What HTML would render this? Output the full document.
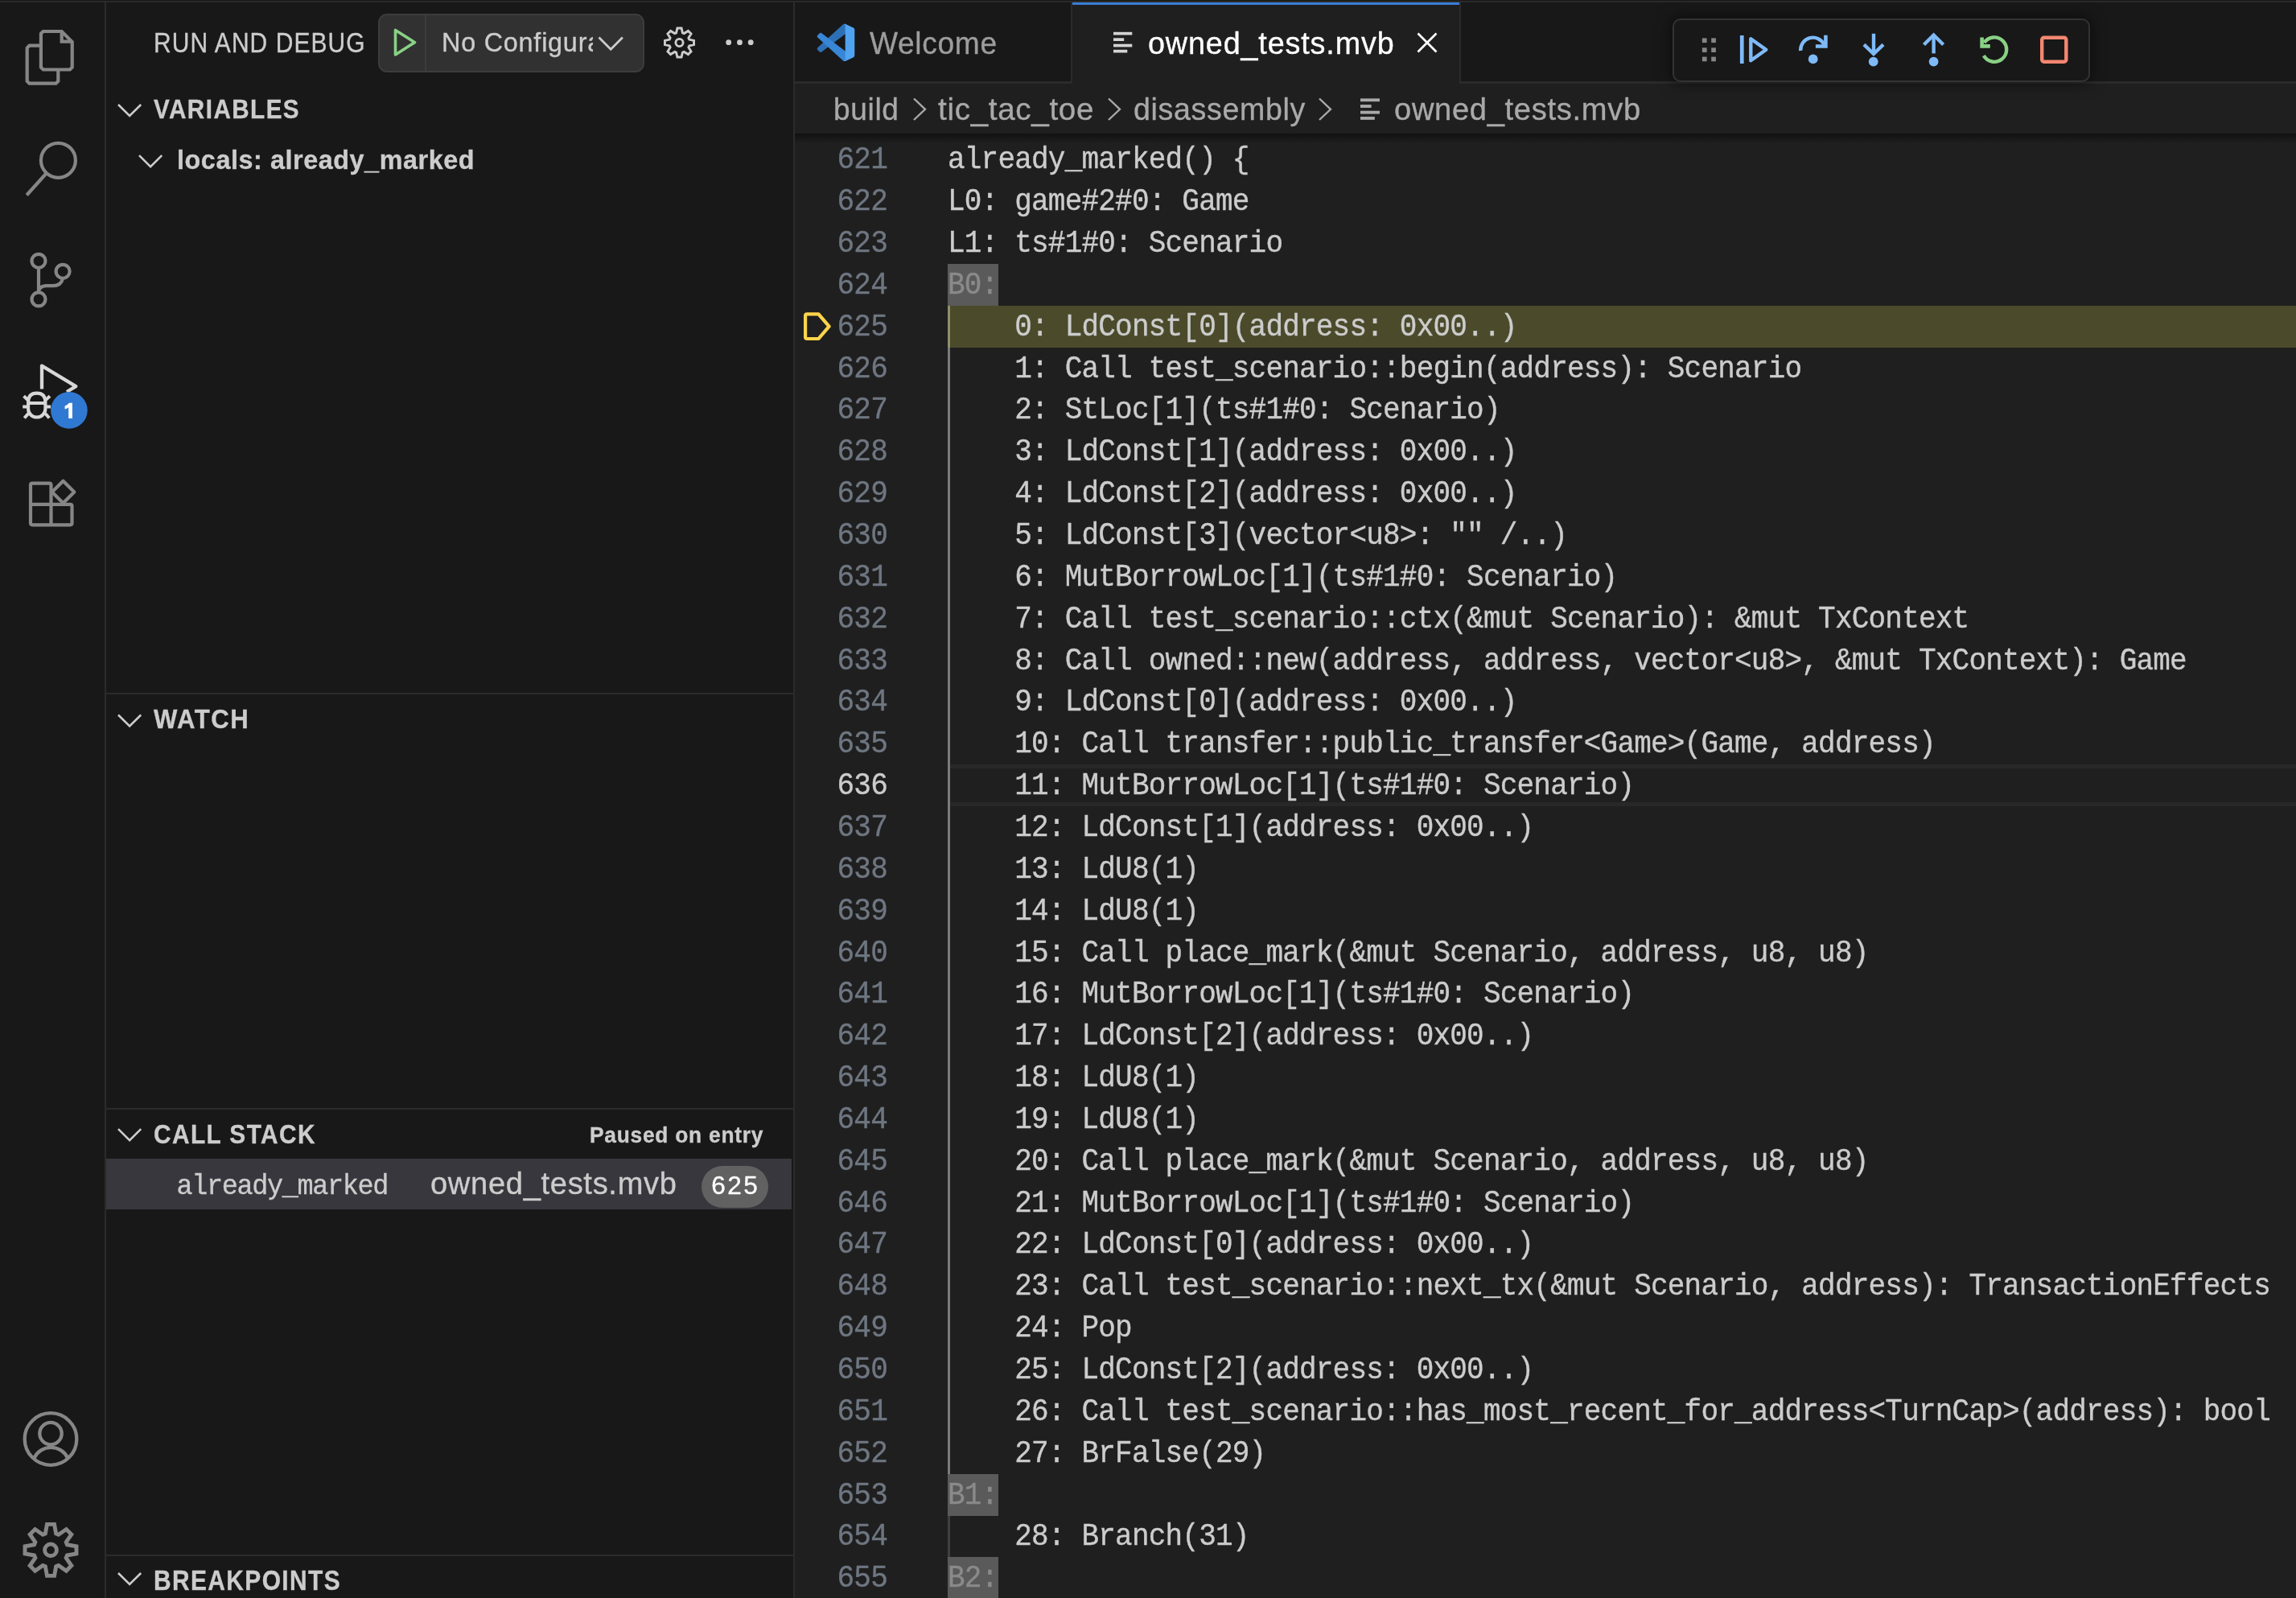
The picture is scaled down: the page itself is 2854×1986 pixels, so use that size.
<!DOCTYPE html>
<html><head><meta charset="utf-8"><style>
html,body{margin:0;padding:0;background:#181818;}
body{width:2854px;height:1986px;position:relative;overflow:hidden;}
.r{position:absolute;}
.t{position:absolute;white-space:pre;}
.ov{position:absolute;left:0;top:0;}
#root{position:absolute;left:0;top:0;width:2854px;height:1986px;will-change:transform;}
.t{-webkit-text-stroke:0.35px currentColor;}
</style></head><body><div id="root">
<div class="r" style="left:0px;top:0px;width:2854px;height:1986px;background:#181818;"></div><div class="r" style="left:0px;top:1px;width:2854px;height:2px;background:#2a2a2a;"></div><div class="r" style="left:130px;top:3px;width:2px;height:1983px;background:#2b2b2b;"></div><div class="r" style="left:986px;top:3px;width:2px;height:1983px;background:#2b2b2b;"></div><div class="r" style="left:988px;top:104px;width:1866px;height:1882px;background:#1f1f1f;"></div><div class="r" style="left:988px;top:101px;width:1866px;height:3px;background:#2b2b2b;"></div><div class="r" style="left:1331px;top:3px;width:2px;height:98px;background:#2b2b2b;"></div><div class="r" style="left:1333px;top:3px;width:481px;height:101px;background:#1f1f1f;"></div><div class="r" style="left:1333px;top:3px;width:481px;height:3px;background:#3a7dd6;"></div><div class="r" style="left:1814px;top:3px;width:2px;height:101px;background:#2b2b2b;"></div><div class="r" style="left:988px;top:166px;width:1866px;height:12px;background:linear-gradient(to bottom, rgba(0,0,0,0.45), rgba(0,0,0,0));"></div><div class="t" style="left:1081.00px;top:32.00px;font-family:'Liberation Sans', sans-serif;font-size:39.20px;line-height:43px;font-weight:normal;font-style:normal;color:#9d9d9d;letter-spacing:0.700px;transform:scaleX(0.9477);transform-origin:0 0;">Welcome</div><div class="t" style="left:1427.00px;top:31.20px;font-family:'Liberation Sans', sans-serif;font-size:39.50px;line-height:44px;font-weight:normal;font-style:normal;color:#ffffff;letter-spacing:0.900px;transform:scaleX(0.9554);transform-origin:0 0;">owned_tests.mvb</div><div class="t" style="left:1035.70px;top:114.10px;font-family:'Liberation Sans', sans-serif;font-size:38.80px;line-height:43px;font-weight:normal;font-style:normal;color:#a9a9a9;letter-spacing:0.700px;transform:scaleX(0.9552);transform-origin:0 0;">build</div><div class="t" style="left:1166.30px;top:114.10px;font-family:'Liberation Sans', sans-serif;font-size:38.80px;line-height:43px;font-weight:normal;font-style:normal;color:#a9a9a9;letter-spacing:0.700px;transform:scaleX(0.9937);transform-origin:0 0;">tic_tac_toe</div><div class="t" style="left:1408.60px;top:114.10px;font-family:'Liberation Sans', sans-serif;font-size:38.80px;line-height:43px;font-weight:normal;font-style:normal;color:#a9a9a9;letter-spacing:0.700px;transform:scaleX(0.9673);transform-origin:0 0;">disassembly</div><div class="t" style="left:1733.40px;top:114.10px;font-family:'Liberation Sans', sans-serif;font-size:38.80px;line-height:43px;font-weight:normal;font-style:normal;color:#a9a9a9;letter-spacing:0.700px;transform:scaleX(0.9821);transform-origin:0 0;">owned_tests.mvb</div><div class="r" style="left:2079px;top:23px;width:519px;height:79px;background:#181818;border:2px solid #333333;box-sizing:border-box;border-radius:10px;box-shadow:0 0 18px 2px rgba(0,0,0,0.5);"></div><div class="r" style="left:1178px;top:379.95px;width:1676px;height:51.85px;background:#4b4b2c;"></div><div class="r" style="left:1181px;top:950.30px;width:1673px;height:51.85px;border-top:5px solid #282828;border-bottom:5px solid #282828;box-sizing:border-box;"></div><div class="r" style="left:1178px;top:328.10px;width:63px;height:51.85px;background:#5a5a5a;"></div><div class="r" style="left:1178px;top:1831.75px;width:63px;height:51.85px;background:#5a5a5a;"></div><div class="r" style="left:1178px;top:1935.45px;width:63px;height:51.85px;background:#5a5a5a;"></div><div class="r" style="left:1178px;top:379.95px;width:3px;height:1451.80px;background:#7a7a7a;"></div><div class="r" style="left:1178px;top:1883.60px;width:3px;height:51.85px;background:#404040;"></div><div class="r" style="left:1178px;top:379.95px;width:3px;height:51.85px;background:#8f8f6a;"></div><div class="t" style="left:1040.57px;top:179.35px;font-family:'Liberation Mono', monospace;font-size:36.0px;line-height:41px;color:#6e7681;letter-spacing:-0.794px;transform:scaleY(1.07);transform-origin:0 30px;">621</div><div class="t" style="left:1178.00px;top:179.35px;font-family:'Liberation Mono', monospace;font-size:36.0px;line-height:41px;color:#cccccc;letter-spacing:-0.794px;transform:scaleY(1.07);transform-origin:0 30px;">already_marked() {</div><div class="t" style="left:1040.57px;top:231.20px;font-family:'Liberation Mono', monospace;font-size:36.0px;line-height:41px;color:#6e7681;letter-spacing:-0.794px;transform:scaleY(1.07);transform-origin:0 30px;">622</div><div class="t" style="left:1178.00px;top:231.20px;font-family:'Liberation Mono', monospace;font-size:36.0px;line-height:41px;color:#cccccc;letter-spacing:-0.794px;transform:scaleY(1.07);transform-origin:0 30px;">L0: game#2#0: Game</div><div class="t" style="left:1040.57px;top:283.05px;font-family:'Liberation Mono', monospace;font-size:36.0px;line-height:41px;color:#6e7681;letter-spacing:-0.794px;transform:scaleY(1.07);transform-origin:0 30px;">623</div><div class="t" style="left:1178.00px;top:283.05px;font-family:'Liberation Mono', monospace;font-size:36.0px;line-height:41px;color:#cccccc;letter-spacing:-0.794px;transform:scaleY(1.07);transform-origin:0 30px;">L1: ts#1#0: Scenario</div><div class="t" style="left:1040.57px;top:334.90px;font-family:'Liberation Mono', monospace;font-size:36.0px;line-height:41px;color:#6e7681;letter-spacing:-0.794px;transform:scaleY(1.07);transform-origin:0 30px;">624</div><div class="t" style="left:1178.00px;top:334.90px;font-family:'Liberation Mono', monospace;font-size:36.0px;line-height:41px;color:#8a8a8a;letter-spacing:-0.794px;transform:scaleY(1.07);transform-origin:0 30px;">B0:</div><div class="t" style="left:1040.57px;top:386.75px;font-family:'Liberation Mono', monospace;font-size:36.0px;line-height:41px;color:#6e7681;letter-spacing:-0.794px;transform:scaleY(1.07);transform-origin:0 30px;">625</div><div class="t" style="left:1178.00px;top:386.75px;font-family:'Liberation Mono', monospace;font-size:36.0px;line-height:41px;color:#cccccc;letter-spacing:-0.794px;transform:scaleY(1.07);transform-origin:0 30px;">    0: LdConst[0](address: 0x00..)</div><div class="t" style="left:1040.57px;top:438.60px;font-family:'Liberation Mono', monospace;font-size:36.0px;line-height:41px;color:#6e7681;letter-spacing:-0.794px;transform:scaleY(1.07);transform-origin:0 30px;">626</div><div class="t" style="left:1178.00px;top:438.60px;font-family:'Liberation Mono', monospace;font-size:36.0px;line-height:41px;color:#cccccc;letter-spacing:-0.794px;transform:scaleY(1.07);transform-origin:0 30px;">    1: Call test_scenario::begin(address): Scenario</div><div class="t" style="left:1040.57px;top:490.45px;font-family:'Liberation Mono', monospace;font-size:36.0px;line-height:41px;color:#6e7681;letter-spacing:-0.794px;transform:scaleY(1.07);transform-origin:0 30px;">627</div><div class="t" style="left:1178.00px;top:490.45px;font-family:'Liberation Mono', monospace;font-size:36.0px;line-height:41px;color:#cccccc;letter-spacing:-0.794px;transform:scaleY(1.07);transform-origin:0 30px;">    2: StLoc[1](ts#1#0: Scenario)</div><div class="t" style="left:1040.57px;top:542.30px;font-family:'Liberation Mono', monospace;font-size:36.0px;line-height:41px;color:#6e7681;letter-spacing:-0.794px;transform:scaleY(1.07);transform-origin:0 30px;">628</div><div class="t" style="left:1178.00px;top:542.30px;font-family:'Liberation Mono', monospace;font-size:36.0px;line-height:41px;color:#cccccc;letter-spacing:-0.794px;transform:scaleY(1.07);transform-origin:0 30px;">    3: LdConst[1](address: 0x00..)</div><div class="t" style="left:1040.57px;top:594.15px;font-family:'Liberation Mono', monospace;font-size:36.0px;line-height:41px;color:#6e7681;letter-spacing:-0.794px;transform:scaleY(1.07);transform-origin:0 30px;">629</div><div class="t" style="left:1178.00px;top:594.15px;font-family:'Liberation Mono', monospace;font-size:36.0px;line-height:41px;color:#cccccc;letter-spacing:-0.794px;transform:scaleY(1.07);transform-origin:0 30px;">    4: LdConst[2](address: 0x00..)</div><div class="t" style="left:1040.57px;top:646.00px;font-family:'Liberation Mono', monospace;font-size:36.0px;line-height:41px;color:#6e7681;letter-spacing:-0.794px;transform:scaleY(1.07);transform-origin:0 30px;">630</div><div class="t" style="left:1178.00px;top:646.00px;font-family:'Liberation Mono', monospace;font-size:36.0px;line-height:41px;color:#cccccc;letter-spacing:-0.794px;transform:scaleY(1.07);transform-origin:0 30px;">    5: LdConst[3](vector&lt;u8&gt;: &quot;&quot; /..)</div><div class="t" style="left:1040.57px;top:697.85px;font-family:'Liberation Mono', monospace;font-size:36.0px;line-height:41px;color:#6e7681;letter-spacing:-0.794px;transform:scaleY(1.07);transform-origin:0 30px;">631</div><div class="t" style="left:1178.00px;top:697.85px;font-family:'Liberation Mono', monospace;font-size:36.0px;line-height:41px;color:#cccccc;letter-spacing:-0.794px;transform:scaleY(1.07);transform-origin:0 30px;">    6: MutBorrowLoc[1](ts#1#0: Scenario)</div><div class="t" style="left:1040.57px;top:749.70px;font-family:'Liberation Mono', monospace;font-size:36.0px;line-height:41px;color:#6e7681;letter-spacing:-0.794px;transform:scaleY(1.07);transform-origin:0 30px;">632</div><div class="t" style="left:1178.00px;top:749.70px;font-family:'Liberation Mono', monospace;font-size:36.0px;line-height:41px;color:#cccccc;letter-spacing:-0.794px;transform:scaleY(1.07);transform-origin:0 30px;">    7: Call test_scenario::ctx(&amp;mut Scenario): &amp;mut TxContext</div><div class="t" style="left:1040.57px;top:801.55px;font-family:'Liberation Mono', monospace;font-size:36.0px;line-height:41px;color:#6e7681;letter-spacing:-0.794px;transform:scaleY(1.07);transform-origin:0 30px;">633</div><div class="t" style="left:1178.00px;top:801.55px;font-family:'Liberation Mono', monospace;font-size:36.0px;line-height:41px;color:#cccccc;letter-spacing:-0.794px;transform:scaleY(1.07);transform-origin:0 30px;">    8: Call owned::new(address, address, vector&lt;u8&gt;, &amp;mut TxContext): Game</div><div class="t" style="left:1040.57px;top:853.40px;font-family:'Liberation Mono', monospace;font-size:36.0px;line-height:41px;color:#6e7681;letter-spacing:-0.794px;transform:scaleY(1.07);transform-origin:0 30px;">634</div><div class="t" style="left:1178.00px;top:853.40px;font-family:'Liberation Mono', monospace;font-size:36.0px;line-height:41px;color:#cccccc;letter-spacing:-0.794px;transform:scaleY(1.07);transform-origin:0 30px;">    9: LdConst[0](address: 0x00..)</div><div class="t" style="left:1040.57px;top:905.25px;font-family:'Liberation Mono', monospace;font-size:36.0px;line-height:41px;color:#6e7681;letter-spacing:-0.794px;transform:scaleY(1.07);transform-origin:0 30px;">635</div><div class="t" style="left:1178.00px;top:905.25px;font-family:'Liberation Mono', monospace;font-size:36.0px;line-height:41px;color:#cccccc;letter-spacing:-0.794px;transform:scaleY(1.07);transform-origin:0 30px;">    10: Call transfer::public_transfer&lt;Game&gt;(Game, address)</div><div class="t" style="left:1040.57px;top:957.10px;font-family:'Liberation Mono', monospace;font-size:36.0px;line-height:41px;color:#cccccc;letter-spacing:-0.794px;transform:scaleY(1.07);transform-origin:0 30px;">636</div><div class="t" style="left:1178.00px;top:957.10px;font-family:'Liberation Mono', monospace;font-size:36.0px;line-height:41px;color:#cccccc;letter-spacing:-0.794px;transform:scaleY(1.07);transform-origin:0 30px;">    11: MutBorrowLoc[1](ts#1#0: Scenario)</div><div class="t" style="left:1040.57px;top:1008.95px;font-family:'Liberation Mono', monospace;font-size:36.0px;line-height:41px;color:#6e7681;letter-spacing:-0.794px;transform:scaleY(1.07);transform-origin:0 30px;">637</div><div class="t" style="left:1178.00px;top:1008.95px;font-family:'Liberation Mono', monospace;font-size:36.0px;line-height:41px;color:#cccccc;letter-spacing:-0.794px;transform:scaleY(1.07);transform-origin:0 30px;">    12: LdConst[1](address: 0x00..)</div><div class="t" style="left:1040.57px;top:1060.80px;font-family:'Liberation Mono', monospace;font-size:36.0px;line-height:41px;color:#6e7681;letter-spacing:-0.794px;transform:scaleY(1.07);transform-origin:0 30px;">638</div><div class="t" style="left:1178.00px;top:1060.80px;font-family:'Liberation Mono', monospace;font-size:36.0px;line-height:41px;color:#cccccc;letter-spacing:-0.794px;transform:scaleY(1.07);transform-origin:0 30px;">    13: LdU8(1)</div><div class="t" style="left:1040.57px;top:1112.65px;font-family:'Liberation Mono', monospace;font-size:36.0px;line-height:41px;color:#6e7681;letter-spacing:-0.794px;transform:scaleY(1.07);transform-origin:0 30px;">639</div><div class="t" style="left:1178.00px;top:1112.65px;font-family:'Liberation Mono', monospace;font-size:36.0px;line-height:41px;color:#cccccc;letter-spacing:-0.794px;transform:scaleY(1.07);transform-origin:0 30px;">    14: LdU8(1)</div><div class="t" style="left:1040.57px;top:1164.50px;font-family:'Liberation Mono', monospace;font-size:36.0px;line-height:41px;color:#6e7681;letter-spacing:-0.794px;transform:scaleY(1.07);transform-origin:0 30px;">640</div><div class="t" style="left:1178.00px;top:1164.50px;font-family:'Liberation Mono', monospace;font-size:36.0px;line-height:41px;color:#cccccc;letter-spacing:-0.794px;transform:scaleY(1.07);transform-origin:0 30px;">    15: Call place_mark(&amp;mut Scenario, address, u8, u8)</div><div class="t" style="left:1040.57px;top:1216.35px;font-family:'Liberation Mono', monospace;font-size:36.0px;line-height:41px;color:#6e7681;letter-spacing:-0.794px;transform:scaleY(1.07);transform-origin:0 30px;">641</div><div class="t" style="left:1178.00px;top:1216.35px;font-family:'Liberation Mono', monospace;font-size:36.0px;line-height:41px;color:#cccccc;letter-spacing:-0.794px;transform:scaleY(1.07);transform-origin:0 30px;">    16: MutBorrowLoc[1](ts#1#0: Scenario)</div><div class="t" style="left:1040.57px;top:1268.20px;font-family:'Liberation Mono', monospace;font-size:36.0px;line-height:41px;color:#6e7681;letter-spacing:-0.794px;transform:scaleY(1.07);transform-origin:0 30px;">642</div><div class="t" style="left:1178.00px;top:1268.20px;font-family:'Liberation Mono', monospace;font-size:36.0px;line-height:41px;color:#cccccc;letter-spacing:-0.794px;transform:scaleY(1.07);transform-origin:0 30px;">    17: LdConst[2](address: 0x00..)</div><div class="t" style="left:1040.57px;top:1320.05px;font-family:'Liberation Mono', monospace;font-size:36.0px;line-height:41px;color:#6e7681;letter-spacing:-0.794px;transform:scaleY(1.07);transform-origin:0 30px;">643</div><div class="t" style="left:1178.00px;top:1320.05px;font-family:'Liberation Mono', monospace;font-size:36.0px;line-height:41px;color:#cccccc;letter-spacing:-0.794px;transform:scaleY(1.07);transform-origin:0 30px;">    18: LdU8(1)</div><div class="t" style="left:1040.57px;top:1371.90px;font-family:'Liberation Mono', monospace;font-size:36.0px;line-height:41px;color:#6e7681;letter-spacing:-0.794px;transform:scaleY(1.07);transform-origin:0 30px;">644</div><div class="t" style="left:1178.00px;top:1371.90px;font-family:'Liberation Mono', monospace;font-size:36.0px;line-height:41px;color:#cccccc;letter-spacing:-0.794px;transform:scaleY(1.07);transform-origin:0 30px;">    19: LdU8(1)</div><div class="t" style="left:1040.57px;top:1423.75px;font-family:'Liberation Mono', monospace;font-size:36.0px;line-height:41px;color:#6e7681;letter-spacing:-0.794px;transform:scaleY(1.07);transform-origin:0 30px;">645</div><div class="t" style="left:1178.00px;top:1423.75px;font-family:'Liberation Mono', monospace;font-size:36.0px;line-height:41px;color:#cccccc;letter-spacing:-0.794px;transform:scaleY(1.07);transform-origin:0 30px;">    20: Call place_mark(&amp;mut Scenario, address, u8, u8)</div><div class="t" style="left:1040.57px;top:1475.60px;font-family:'Liberation Mono', monospace;font-size:36.0px;line-height:41px;color:#6e7681;letter-spacing:-0.794px;transform:scaleY(1.07);transform-origin:0 30px;">646</div><div class="t" style="left:1178.00px;top:1475.60px;font-family:'Liberation Mono', monospace;font-size:36.0px;line-height:41px;color:#cccccc;letter-spacing:-0.794px;transform:scaleY(1.07);transform-origin:0 30px;">    21: MutBorrowLoc[1](ts#1#0: Scenario)</div><div class="t" style="left:1040.57px;top:1527.45px;font-family:'Liberation Mono', monospace;font-size:36.0px;line-height:41px;color:#6e7681;letter-spacing:-0.794px;transform:scaleY(1.07);transform-origin:0 30px;">647</div><div class="t" style="left:1178.00px;top:1527.45px;font-family:'Liberation Mono', monospace;font-size:36.0px;line-height:41px;color:#cccccc;letter-spacing:-0.794px;transform:scaleY(1.07);transform-origin:0 30px;">    22: LdConst[0](address: 0x00..)</div><div class="t" style="left:1040.57px;top:1579.30px;font-family:'Liberation Mono', monospace;font-size:36.0px;line-height:41px;color:#6e7681;letter-spacing:-0.794px;transform:scaleY(1.07);transform-origin:0 30px;">648</div><div class="t" style="left:1178.00px;top:1579.30px;font-family:'Liberation Mono', monospace;font-size:36.0px;line-height:41px;color:#cccccc;letter-spacing:-0.794px;transform:scaleY(1.07);transform-origin:0 30px;">    23: Call test_scenario::next_tx(&amp;mut Scenario, address): TransactionEffects</div><div class="t" style="left:1040.57px;top:1631.15px;font-family:'Liberation Mono', monospace;font-size:36.0px;line-height:41px;color:#6e7681;letter-spacing:-0.794px;transform:scaleY(1.07);transform-origin:0 30px;">649</div><div class="t" style="left:1178.00px;top:1631.15px;font-family:'Liberation Mono', monospace;font-size:36.0px;line-height:41px;color:#cccccc;letter-spacing:-0.794px;transform:scaleY(1.07);transform-origin:0 30px;">    24: Pop</div><div class="t" style="left:1040.57px;top:1683.00px;font-family:'Liberation Mono', monospace;font-size:36.0px;line-height:41px;color:#6e7681;letter-spacing:-0.794px;transform:scaleY(1.07);transform-origin:0 30px;">650</div><div class="t" style="left:1178.00px;top:1683.00px;font-family:'Liberation Mono', monospace;font-size:36.0px;line-height:41px;color:#cccccc;letter-spacing:-0.794px;transform:scaleY(1.07);transform-origin:0 30px;">    25: LdConst[2](address: 0x00..)</div><div class="t" style="left:1040.57px;top:1734.85px;font-family:'Liberation Mono', monospace;font-size:36.0px;line-height:41px;color:#6e7681;letter-spacing:-0.794px;transform:scaleY(1.07);transform-origin:0 30px;">651</div><div class="t" style="left:1178.00px;top:1734.85px;font-family:'Liberation Mono', monospace;font-size:36.0px;line-height:41px;color:#cccccc;letter-spacing:-0.794px;transform:scaleY(1.07);transform-origin:0 30px;">    26: Call test_scenario::has_most_recent_for_address&lt;TurnCap&gt;(address): bool</div><div class="t" style="left:1040.57px;top:1786.70px;font-family:'Liberation Mono', monospace;font-size:36.0px;line-height:41px;color:#6e7681;letter-spacing:-0.794px;transform:scaleY(1.07);transform-origin:0 30px;">652</div><div class="t" style="left:1178.00px;top:1786.70px;font-family:'Liberation Mono', monospace;font-size:36.0px;line-height:41px;color:#cccccc;letter-spacing:-0.794px;transform:scaleY(1.07);transform-origin:0 30px;">    27: BrFalse(29)</div><div class="t" style="left:1040.57px;top:1838.55px;font-family:'Liberation Mono', monospace;font-size:36.0px;line-height:41px;color:#6e7681;letter-spacing:-0.794px;transform:scaleY(1.07);transform-origin:0 30px;">653</div><div class="t" style="left:1178.00px;top:1838.55px;font-family:'Liberation Mono', monospace;font-size:36.0px;line-height:41px;color:#8a8a8a;letter-spacing:-0.794px;transform:scaleY(1.07);transform-origin:0 30px;">B1:</div><div class="t" style="left:1040.57px;top:1890.40px;font-family:'Liberation Mono', monospace;font-size:36.0px;line-height:41px;color:#6e7681;letter-spacing:-0.794px;transform:scaleY(1.07);transform-origin:0 30px;">654</div><div class="t" style="left:1178.00px;top:1890.40px;font-family:'Liberation Mono', monospace;font-size:36.0px;line-height:41px;color:#cccccc;letter-spacing:-0.794px;transform:scaleY(1.07);transform-origin:0 30px;">    28: Branch(31)</div><div class="t" style="left:1040.57px;top:1942.25px;font-family:'Liberation Mono', monospace;font-size:36.0px;line-height:41px;color:#6e7681;letter-spacing:-0.794px;transform:scaleY(1.07);transform-origin:0 30px;">655</div><div class="t" style="left:1178.00px;top:1942.25px;font-family:'Liberation Mono', monospace;font-size:36.0px;line-height:41px;color:#8a8a8a;letter-spacing:-0.794px;transform:scaleY(1.07);transform-origin:0 30px;">B2:</div><div class="t" style="left:191.30px;top:34.30px;font-family:'Liberation Sans', sans-serif;font-size:34.20px;line-height:38px;font-weight:normal;font-style:normal;color:#cccccc;letter-spacing:1.200px;transform:scaleX(0.8771);transform-origin:0 0;">RUN AND DEBUG</div><div class="r" style="left:470px;top:17px;width:331px;height:73px;background:#313131;border:2px solid #3c3c3c;box-sizing:border-box;border-radius:11px;"></div><div class="r" style="left:528px;top:19px;width:2px;height:69px;background:#3c3c3c;"></div><div class="r" style="left:540px;top:20px;width:197px;height:66px;overflow:hidden;"><div class="t" style="left:8.50px;top:14.20px;font-family:'Liberation Sans', sans-serif;font-size:33.40px;line-height:37px;font-weight:normal;font-style:normal;color:#cccccc;letter-spacing:0.800px;transform:scaleX(0.9691);transform-origin:0 0;">No Configuration</div></div><div class="t" style="left:190.80px;top:116.80px;font-family:'Liberation Sans', sans-serif;font-size:33.40px;line-height:37px;font-weight:bold;font-style:normal;color:#cccccc;letter-spacing:1.600px;transform:scaleX(0.8888);transform-origin:0 0;">VARIABLES</div><div class="t" style="left:219.80px;top:179.00px;font-family:'Liberation Sans', sans-serif;font-size:34.00px;line-height:38px;font-weight:bold;font-style:normal;color:#cccccc;letter-spacing:0.600px;transform:scaleX(0.9505);transform-origin:0 0;">locals: already_marked</div><div class="r" style="left:132px;top:861px;width:854px;height:2px;background:#2b2b2b;"></div><div class="t" style="left:190.60px;top:874.10px;font-family:'Liberation Sans', sans-serif;font-size:33.80px;line-height:38px;font-weight:bold;font-style:normal;color:#cccccc;letter-spacing:1.600px;transform:scaleX(0.9204);transform-origin:0 0;">WATCH</div><div class="r" style="left:132px;top:1377px;width:854px;height:2px;background:#2b2b2b;"></div><div class="t" style="left:190.60px;top:1390.20px;font-family:'Liberation Sans', sans-serif;font-size:33.80px;line-height:38px;font-weight:bold;font-style:normal;color:#cccccc;letter-spacing:1.600px;transform:scaleX(0.8827);transform-origin:0 0;">CALL STACK</div><div class="t" style="left:733.20px;top:1395.00px;font-family:'Liberation Sans', sans-serif;font-size:27.60px;line-height:31px;font-weight:bold;font-style:normal;color:#cccccc;letter-spacing:0.800px;transform:scaleX(0.9538);transform-origin:0 0;">Paused on entry</div><div class="r" style="left:132px;top:1440px;width:852px;height:63px;background:#37373d;"></div><div class="t" style="left:219.60px;top:1455.50px;font-family:'Liberation Mono', monospace;font-size:33.50px;line-height:38px;font-weight:normal;font-style:normal;color:#cccccc;letter-spacing:-1.354px;transform:scaleY(1.05);transform-origin:0 28px;">already_marked</div><div class="t" style="left:535.10px;top:1449.40px;font-family:'Liberation Sans', sans-serif;font-size:38.80px;line-height:43px;font-weight:normal;font-style:normal;color:#cccccc;letter-spacing:0.700px;transform:scaleX(0.9815);transform-origin:0 0;">owned_tests.mvb</div><div class="r" style="left:872px;top:1449px;width:83px;height:52px;background:#616161;border-radius:26px;"></div><div class="t" style="left:884.30px;top:1455.40px;font-family:'Liberation Sans', sans-serif;font-size:31.50px;line-height:36px;font-weight:normal;font-style:normal;color:#ffffff;letter-spacing:2.400px;">625</div><div class="r" style="left:132px;top:1932px;width:854px;height:2px;background:#2b2b2b;"></div><div class="t" style="left:191.40px;top:1945.10px;font-family:'Liberation Sans', sans-serif;font-size:34.40px;line-height:38px;font-weight:bold;font-style:normal;color:#cccccc;letter-spacing:1.600px;transform:scaleX(0.8698);transform-origin:0 0;">BREAKPOINTS</div><svg class="ov" width="2854" height="1986" viewBox="0 0 2854 1986"><polyline points="1136,122.5 1150,135.8 1136,149" fill="none" stroke="#a9a9a9" stroke-width="2.4"/><polyline points="1378,122.5 1392,135.8 1378,149" fill="none" stroke="#a9a9a9" stroke-width="2.4"/><polyline points="1640,122.5 1654,135.8 1640,149" fill="none" stroke="#a9a9a9" stroke-width="2.4"/><rect x="1384" y="39.80" width="23.30" height="3.70" fill="#d4d4d4"/><rect x="1384" y="47.30" width="13.20" height="3.70" fill="#d4d4d4"/><rect x="1384" y="54.70" width="23.30" height="3.70" fill="#d4d4d4"/><rect x="1384" y="61.80" width="17.30" height="3.70" fill="#d4d4d4"/><rect x="1691" y="122.40" width="24.00" height="3.81" fill="#a9a9a9"/><rect x="1691" y="130.12" width="13.60" height="3.81" fill="#a9a9a9"/><rect x="1691" y="137.75" width="24.00" height="3.81" fill="#a9a9a9"/><rect x="1691" y="145.06" width="17.82" height="3.81" fill="#a9a9a9"/><path d="M1762.5,41.5 L1785.5,64.5 M1785.5,41.5 L1762.5,64.5" stroke="#ffffff" stroke-width="2.7" fill="none"/><g transform="translate(1015.7,29.6) scale(0.466)"><path fill="#2d70b6" d="M96.4614 10.7962L75.8569 0.875542C73.4719 -0.272773 70.6217 0.211611 68.75 2.08333L1.29858 63.5832C-0.515693 65.2373 -0.513607 68.0937 1.30308 69.7452L6.81272 74.754C8.29793 76.1042 10.5347 76.2036 12.1338 74.9905L93.3609 13.3699C96.086 11.3026 100 13.2462 100 16.6667V16.4275C100 14.0265 98.6246 11.8378 96.4614 10.7962Z"/><path fill="#3886d6" d="M96.4614 89.2038L75.8569 99.1245C73.4719 100.273 70.6217 99.7884 68.75 97.9167L1.29858 36.4169C-0.515693 34.7627 -0.513607 31.9063 1.30308 30.2548L6.81272 25.246C8.29793 23.8958 10.5347 23.7964 12.1338 25.0095L93.3609 86.6301C96.086 88.6974 100 86.7538 100 83.3334V83.5726C100 85.9735 98.6246 88.1622 96.4614 89.2038Z"/><path fill="#4fa3ef" d="M75.8578 99.1263C73.4721 100.274 70.6219 99.7885 68.75 97.9166C71.0564 100.223 75 98.5895 75 95.3278V4.67213C75 1.41039 71.0564 -0.223106 68.75 2.08329C70.6219 0.211402 73.4721 -0.273666 75.8578 0.873633L96.4587 10.7807C98.6234 11.8217 100 14.0112 100 16.4132V83.5871C100 85.9891 98.6234 88.1786 96.4586 89.2196L75.8578 99.1263Z"/></g><rect x="2115.9" y="47.4" width="5.7" height="5.7" fill="#868686"/><rect x="2115.9" y="59.3" width="5.7" height="5.7" fill="#868686"/><rect x="2115.9" y="70.6" width="5.7" height="5.7" fill="#868686"/><rect x="2127.2" y="47.4" width="5.7" height="5.7" fill="#868686"/><rect x="2127.2" y="59.3" width="5.7" height="5.7" fill="#868686"/><rect x="2127.2" y="70.6" width="5.7" height="5.7" fill="#868686"/><rect x="2162.9" y="44" width="4.7" height="35" fill="#7fbaf7"/><path d="M2176.3,48.3 L2176.3,75.3 L2195.3,61.8 Z" fill="none" stroke="#7fbaf7" stroke-width="4.4" stroke-linejoin="round"/><path d="M2238.2,63 A15.4,15.4 0 0 1 2267.5,55.5" fill="none" stroke="#7fbaf7" stroke-width="4.4"/><path d="M2269.4,43.7 L2269.4,57.5 L2256.9,57.5" fill="none" stroke="#7fbaf7" stroke-width="4.6"/><circle cx="2253.7" cy="73.4" r="5.9" fill="#7fbaf7"/><path d="M2329,41.8 L2329,65" fill="none" stroke="#7fbaf7" stroke-width="4.4"/><path d="M2317,55.3 L2329,67 L2341,55.3" fill="none" stroke="#7fbaf7" stroke-width="4.4"/><circle cx="2328.7" cy="76.6" r="5.9" fill="#7fbaf7"/><path d="M2403.6,45 L2403.6,66.4" fill="none" stroke="#7fbaf7" stroke-width="4.4"/><path d="M2391.5,55.5 L2403.6,43.5 L2415.6,55.5" fill="none" stroke="#7fbaf7" stroke-width="4.4"/><circle cx="2403.6" cy="76.6" r="5.9" fill="#7fbaf7"/><path d="M2466.5,52.9 A15.2,15.2 0 1 1 2465.8,69.2" fill="none" stroke="#89d185" stroke-width="4.4"/><path d="M2463.6,46.6 L2463.6,57.4 L2473.8,57.4" fill="none" stroke="#89d185" stroke-width="4.6"/><rect x="2538.2" y="46.8" width="30.1" height="30" rx="2.5" fill="none" stroke="#f48771" stroke-width="4.4"/><path d="M1003.2,390.4 L1017.5,390.4 L1030.6,405.7 L1017.5,421 L1003.2,421 Q1001.1,421 1001.1,419 L1001.1,392.4 Q1001.1,390.4 1003.2,390.4 Z" fill="none" stroke="#fdd44a" stroke-width="4.2" stroke-linejoin="round"/><path d="M491.5,37.5 L491.5,68 L515.5,52.7 Z" fill="none" stroke="#89d185" stroke-width="3.6" stroke-linejoin="round"/><polyline points="744.5,46.5 759.2,61.2 773.9,46.5" fill="none" stroke="#cccccc" stroke-width="2.8"/><path d="M840.54,40.83 L841.94,34.98 L847.06,34.98 L848.46,40.83 L850.31,41.60 L855.43,38.45 L859.05,42.07 L855.90,47.19 L856.67,49.04 L862.52,50.44 L862.52,55.56 L856.67,56.96 L855.90,58.81 L859.05,63.93 L855.43,67.55 L850.31,64.40 L848.46,65.17 L847.06,71.02 L841.94,71.02 L840.54,65.17 L838.69,64.40 L833.57,67.55 L829.95,63.93 L833.10,58.81 L832.33,56.96 L826.48,55.56 L826.48,50.44 L832.33,49.04 L833.10,47.19 L829.95,42.07 L833.57,38.45 L838.69,41.60 Z" fill="none" stroke="#cccccc" stroke-width="2.9" stroke-linejoin="miter"/><circle cx="844.5" cy="53" r="4.6" fill="none" stroke="#cccccc" stroke-width="2.9"/><circle cx="905.7" cy="52.7" r="3.4" fill="#cccccc"/><circle cx="919.5" cy="52.7" r="3.4" fill="#cccccc"/><circle cx="933.2" cy="52.7" r="3.4" fill="#cccccc"/><polyline points="147,130 161.1,144 175.2,130" fill="none" stroke="#cccccc" stroke-width="2.6"/><polyline points="173,193.2 187.1,207.2 201.2,193.2" fill="none" stroke="#cccccc" stroke-width="2.6"/><polyline points="147,888.5 161.1,902.5 175.2,888.5" fill="none" stroke="#cccccc" stroke-width="2.6"/><polyline points="147,1403.2 161.1,1417.2 175.2,1403.2" fill="none" stroke="#cccccc" stroke-width="2.6"/><polyline points="147,1955 161.1,1969 175.2,1955" fill="none" stroke="#cccccc" stroke-width="2.6"/><path d="M50.9,41.8 L53.7,39 L76.7,39 L89.7,52 L89.7,83.7 L86.9,86.5 L53.7,86.5 L50.9,83.7 Z" fill="none" stroke="#868686" stroke-width="4.2" stroke-linejoin="miter"/><path d="M76.7,39 L76.7,51.7 L89.7,51.7" fill="none" stroke="#868686" stroke-width="4.2"/><path d="M50.9,56.7 L36.5,56.7 L33.7,59.5 L33.7,100.9 L36.5,103.7 L69.5,103.7 L72.3,100.9 L72.3,86.5" fill="none" stroke="#868686" stroke-width="4.2" stroke-linejoin="miter"/><circle cx="72.4" cy="199.3" r="21.5" fill="none" stroke="#868686" stroke-width="4.2"/><path d="M57.5,215.5 L33.2,242.5" stroke="#868686" stroke-width="4.2"/><circle cx="48" cy="324.3" r="8.5" fill="none" stroke="#868686" stroke-width="4.2"/><circle cx="78.1" cy="337.3" r="8.5" fill="none" stroke="#868686" stroke-width="4.2"/><circle cx="48" cy="371.9" r="8.5" fill="none" stroke="#868686" stroke-width="4.2"/><path d="M48,332.8 L48,363.4" stroke="#868686" stroke-width="4.2"/><path d="M78.1,345.8 Q76,355.2 66,355.2 L57,355.2 Q49.5,355.6 48,362" fill="none" stroke="#868686" stroke-width="4.2"/><path d="M52,483.5 L52,454.6 L94.3,480.2 L83,487" fill="none" stroke="#d7d7d7" stroke-width="4.3" stroke-linejoin="round"/><path d="M35.1,500 Q35.1,488.6 45.75,488.6 Q56.4,488.6 56.4,500 L56.4,507.9 A10.65,10.65 0 0 1 35.1,507.9 Z" fill="none" stroke="#d7d7d7" stroke-width="4.1"/><path d="M35.1,501 L56.4,501 M29.6,492.3 L35.8,498.3 M55.7,498.1 L62,492.3 M28.2,505.4 L35,505.4 M56.5,505.4 L63,505.4 M35.8,513.3 L30.3,519.5 M56.4,514 L61.2,519.5" fill="none" stroke="#d7d7d7" stroke-width="4"/><circle cx="85.9" cy="509.9" r="22.8" fill="#3079d2"/><path d="M85.2,520 L89.9,520 L89.9,500.8 L86,500.8 Q84,503.2 80.6,504.6 L80.6,508.6 Q83.2,507.8 85.2,506.2 Z" fill="#ffffff"/><path d="M40.2,600.6 L61.3,600.6 Q63.5,600.6 63.5,602.8 L63.5,652.3 M38,602.8 Q38,600.6 40.2,600.6 M38,602.8 L38,650.1 Q38,652.3 40.2,652.3 L87.3,652.3 Q89.5,652.3 89.5,650.1 L89.5,629 Q89.5,626.8 87.3,626.8 L38,626.8" fill="none" stroke="#868686" stroke-width="4.2" stroke-linejoin="round"/><path d="M78.5,597.7 L92.3,611.5 L78.5,625.3 L64.7,611.5 Z" fill="none" stroke="#868686" stroke-width="4.2" stroke-linejoin="round"/><circle cx="63" cy="1788.5" r="32.3" fill="none" stroke="#868686" stroke-width="4.3"/><circle cx="63" cy="1781.6" r="13.7" fill="none" stroke="#868686" stroke-width="4.3"/><path d="M42.5,1812 A23.06,23.06 0 0 1 84.2,1812" fill="none" stroke="#868686" stroke-width="4.3"/><path d="M56.36,1905.95 L58.45,1894.42 L67.55,1894.42 L69.64,1905.95 L72.76,1907.24 L82.39,1900.57 L88.83,1907.01 L82.16,1916.64 L83.45,1919.76 L94.98,1921.85 L94.98,1930.95 L83.45,1933.04 L82.16,1936.16 L88.83,1945.79 L82.39,1952.23 L72.76,1945.56 L69.64,1946.85 L67.55,1958.38 L58.45,1958.38 L56.36,1946.85 L53.24,1945.56 L43.61,1952.23 L37.17,1945.79 L43.84,1936.16 L42.55,1933.04 L31.02,1930.95 L31.02,1921.85 L42.55,1919.76 L43.84,1916.64 L37.17,1907.01 L43.61,1900.57 L53.24,1907.24 Z" fill="none" stroke="#868686" stroke-width="4.9" stroke-linejoin="miter"/><circle cx="63" cy="1926.4" r="7.4" fill="none" stroke="#868686" stroke-width="4.9"/></svg>
</div></body></html>
